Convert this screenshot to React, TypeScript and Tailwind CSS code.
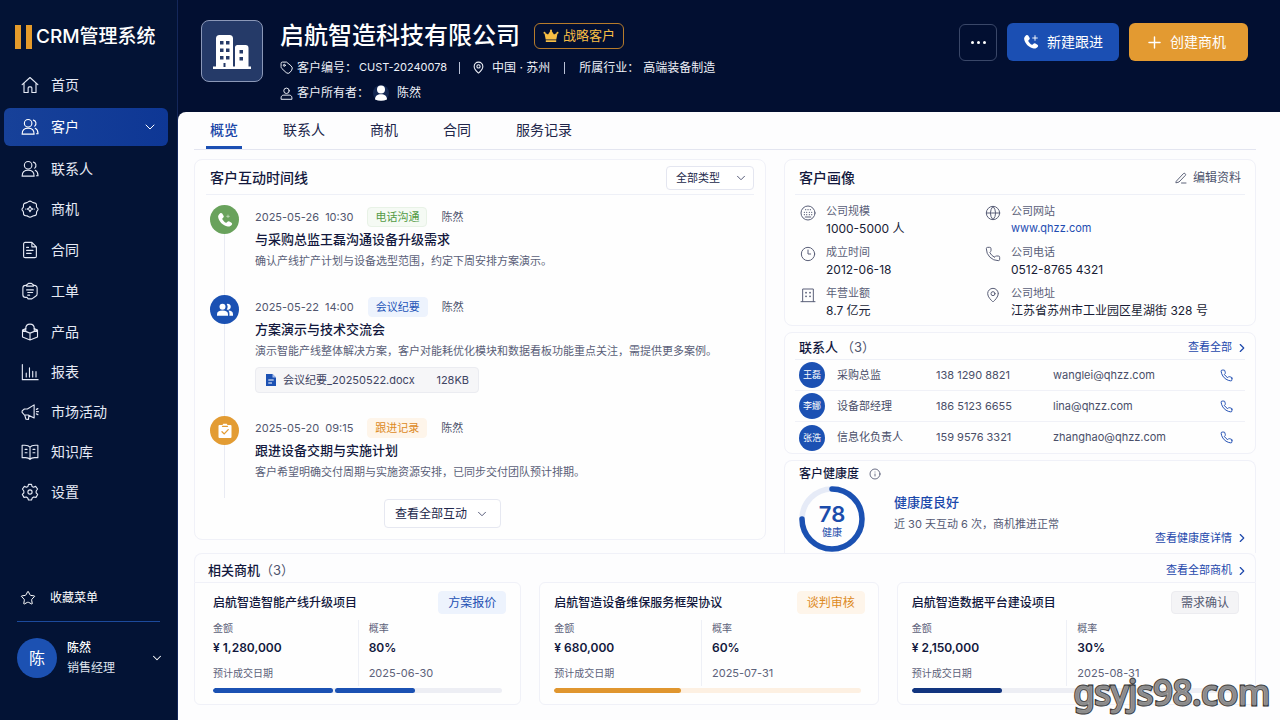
import type { ReactNode } from "react";
import { ChevronDown, ChevronRight, Clock3, Globe, Info, MapPin, Phone, Plus, Star } from "lucide-react";

type IconProps = { children: ReactNode; className?: string; strokeWidth?: number };

function Line({ children, className = "size-[18px]", strokeWidth = 1.5 }: IconProps) {
  return (
    <svg viewBox="0 0 24 24" className={className} fill="none" stroke="currentColor" strokeWidth={strokeWidth} strokeLinecap="round" strokeLinejoin="round" aria-hidden="true">
      {children}
    </svg>
  );
}

const PHONE = "M22 16.92v3a2 2 0 0 1-2.18 2 19.79 19.79 0 0 1-8.63-3.07 19.5 19.5 0 0 1-6-6 19.79 19.79 0 0 1-3.07-8.67A2 2 0 0 1 4.11 2h3a2 2 0 0 1 2 1.72 12.84 12.84 0 0 0 .7 2.81 2 2 0 0 1-.45 2.11L8.09 9.91a16 16 0 0 0 6 6l1.27-1.27a2 2 0 0 1 2.11-.45 12.84 12.84 0 0 0 2.81.7A2 2 0 0 1 22 16.92z";

function PhonePlus({ className, small }: { className: string; small?: boolean }) {
  return (
    <svg viewBox="0 0 24 24" className={className} fill="currentColor" aria-hidden="true">
      <path d="M4.800 1.800c1-.8 2.300-.6 3 .5l2 3.200c.6 1 .5 2.100-.4 2.900L8.100 9.600c-.3.300-.3.700-.1 1.100 1.400 2.400 3 4.100 5.400 5.400.4.200.8.1 1.100-.2l1.200-1.300c.8-.8 1.900-1 2.900-.4l3.100 1.900c1.100.7 1.300 2 .5 3-1.500 2-3.600 3.200-6.100 2.700C8.900 20.500 2.800 14 1.700 7.400 1.400 5.200 3.100 3.100 4.800 1.800z" />
      {small ? (
        <path d="M16.500 4.500v4M14.500 6.500h4" stroke="currentColor" strokeWidth="1" strokeLinecap="round" opacity="0.700" />
      ) : (
        <path d="M18 2.500v7M14.500 6h7" stroke="currentColor" strokeWidth="1.400" strokeLinecap="round" />
      )}
    </svg>
  );
}

function People() {
  return (
    <Line>
      <circle cx="9.500" cy="7" r="5" />
      <path d="M1.500 21.500c0-4.800 3.200-8 8-8s8 3.200 8 8z" />
      <path d="M16.500 2.800a4.600 4.600 0 0 1 1.800 8M19 13.800c2.400 1.200 3.700 3.700 3.700 7.200h-2" />
    </Line>
  );
}

const home = (
  <Line>
    <path d="M1.500 11.500 12 2l10.500 9.500M4 9.500V22h5.500v-6a1.500 1.500 0 0 1 1.500-1.500h2a1.500 1.500 0 0 1 1.500 1.500v6H20V9.500" />
  </Line>
);
const deal = (
  <Line>
    <path d="M12 1.500c2 0 2.500 1.500 4.200 2s3.300.2 4.100 1.900-.2 2.600.6 4.200 1.800 1.400 1.800 2.900-1.300 1.800-1.800 3.200.3 2.800-.8 4.200-2.600.6-4.200 1.300-2 1.600-3.900 1.600-2.300-1.100-3.900-1.600-3.200.1-4.200-1.300-.2-2.700-.8-4.200S1.300 14 1.300 12.500s1.300-1.600 1.800-2.900-.3-2.700.6-4.200 2.400-1.400 4.100-1.900S10 1.500 12 1.500z" />
    <path d="m12 8.500 1.200 2.300 2.500 1.300-2.500 1.300L12 15.700l-1.200-2.300-2.500-1.300 2.500-1.300z" />
    <path d="M6.300 12.100h.1M17.600 12.100h.1" />
  </Line>
);
const contract = (
  <Line>
    <path d="M14.500 1.800H5.500a2 2 0 0 0-2 2v16.400a2 2 0 0 0 2 2h13a2 2 0 0 0 2-2V7.800zM14.500 1.800v6h6M7.500 8.500h2.500M7.500 12.500h8.500M7.500 16.500h6" />
  </Line>
);
const ticket = (
  <Line>
    <path d="M7.500 4.500H6a3.500 3.500 0 0 0-3.500 3.500v9A3.500 3.500 0 0 0 6 20.500h2l1.500 2h5l5-3.500a3.500 3.500 0 0 0 2-3V8A3.500 3.500 0 0 0 18 4.500h-1.500" />
    <path d="M7.500 5.500V4l2.500-2.200h4L16.500 4v1.500zM7.500 10.500h9M9 14h6.500M9 17.500h2.500" />
  </Line>
);
const product = (
  <Line>
    <path d="M6.500 7.500 2 9.500v9.200l10 4 10-4V9.500l-4.500-2M2 9.500l10 4 10-4M12 13.500v9" />
    <path d="M6.300 11v-3.500C6.300 4 8.500 1.500 12 1.500S17.700 4 17.700 7.500V11" />
  </Line>
);
const report = (
  <Line>
    <path d="M1.800 2v20.200h21M7 18.500v-5M11.300 18.500V6.500M15.600 18.500V11M20 18.500v-7" />
  </Line>
);
const megaphone = (
  <Line>
    <path d="M17.500 2.500v17.500L9.500 16H4.500L1.500 12.500v-2L4.500 8h4zM5 16l1.500 5.500L10 22l.5-5.500" />
    <path d="m20.500 8.500 2-1M20.700 11.500h2.500M20.500 14.500l2 1" />
  </Line>
);
const book = (
  <Line>
    <path d="M12 5.500C10.500 3.500 8 3 5 3H1.500v16.500H6c3 0 4.800.7 6 2.500 1.200-1.800 3-2.500 6-2.500h4.500V3H19c-3 0-5.500.5-7 2.500zM12 5.500V22M5.500 8.500h2.500M5.500 13h2.500M16 8.500h2.500M16 13h2.500" />
  </Line>
);
const gear = (
  <Line>
    <circle cx="12" cy="12" r="2.800" />
    <path d="M10 1.800h4l.8 2.900 1.700.9 3-1.100 2.600 3.500-1.900 2.700v2.500l2 2.100-2.200 3.900-3.100-.5-1.900 1.300-1 2.700h-4l-1-2.700-1.900-1.300-3.100.5-2.200-3.900 2-2.100v-2.500L1.900 8l2.600-3.500 3 1.100 1.700-.9z" />
  </Line>
);

type NavEntry = { label: string; icon: ReactNode; active?: boolean };

const primaryNav: NavEntry[] = [
  { label: "首页", icon: home },
  { label: "客户", icon: <People />, active: true },
  { label: "联系人", icon: <People /> },
];
const businessNav: NavEntry[] = [
  { label: "商机", icon: deal },
  { label: "合同", icon: contract },
  { label: "工单", icon: ticket },
  { label: "产品", icon: product },
];
const systemNav: NavEntry[] = [
  { label: "报表", icon: report },
  { label: "市场活动", icon: megaphone },
  { label: "知识库", icon: book },
  { label: "设置", icon: gear },
];

function NavItem({ item }: { item: NavEntry }) {
  return (
    <li>
      <a
        href="#"
        aria-current={item.active ? "page" : undefined}
        className={
          item.active
            ? "flex h-[38px] items-center gap-3 rounded-md bg-linear-to-r from-[#174199] to-[#0e3795] pr-2.5 pl-[17px] text-sm text-white"
            : "flex h-[38px] items-center gap-3 rounded-md pr-2.5 pl-[17px] text-sm text-[#e6eaf5]"
        }
      >
        {item.icon}
        <span className="flex-1">{item.label}</span>
        {item.active && <ChevronDown className="size-4" strokeWidth={1.5} />}
      </a>
    </li>
  );
}

function Sidebar() {
  return (
    <aside className="flex w-[178px] shrink-0 flex-col border-r border-[#14275a] bg-[#031335] text-[#e6eaf5]">
      <div className="flex h-[66px] items-center gap-1 pt-2 pl-[15px]">
        <span className="flex gap-[5px]" aria-hidden="true">
          <i className="h-6 w-1.5 bg-[#e59b2b]" />
          <i className="h-6 w-1.5 bg-[#e59b2b]" />
        </span>
        <span className="text-[19px] font-medium whitespace-nowrap text-white">CRM管理系统</span>
      </div>
      <nav className="flex flex-col gap-0.5 pr-[9px] pl-1">
        <ul className="flex flex-col gap-1">{primaryNav.map((n) => <NavItem key={n.label} item={n} />)}</ul>
        <ul className="flex flex-col gap-[3px]">{businessNav.map((n) => <NavItem key={n.label} item={n} />)}</ul>
        <ul className="flex flex-col gap-0.5">{systemNav.map((n) => <NavItem key={n.label} item={n} />)}</ul>
      </nav>
      <div className="mt-auto px-[17px] pb-[42px]">
        <a href="#" className="flex h-12 items-center gap-3.5 border-b border-[#1c4a9c] pl-[3px] text-xs text-white">
          <Star className="size-4" strokeWidth={1.5} />
          收藏菜单
        </a>
        <button type="button" className="mt-4 flex w-full items-center gap-2.5 text-left text-xs text-white">
          <span className="grid size-10 shrink-0 place-items-center rounded-full bg-[#1c51b2] text-base">陈</span>
          <span className="flex-1 leading-5">
            <span className="block font-medium">陈然</span>
            <span className="block text-[#dfe3ee]">销售经理</span>
          </span>
          <ChevronDown className="-mr-1 size-3.5" strokeWidth={1.8} />
        </button>
      </div>
    </aside>
  );
}

function Header() {
  return (
    <header className="flex h-28 items-start justify-between gap-4 pr-8 pl-[23px] text-white">
      <div className="flex gap-[17px] pt-5">
        <div className="grid size-[62px] shrink-0 place-items-center rounded-lg border border-[#8b98b8] bg-[#253a68]">
          <svg viewBox="0 0 40 36" className="h-9 w-10" aria-hidden="true">
            <path fill="#fff" fillRule="evenodd" d="M1 33.500h3V5.500A3.500 3.500 0 0 1 7.500 2h10A3.500 3.500 0 0 1 21 5.500v28h2V14.500a2.500 2.500 0 0 1 2.500-2.500h8a3 3 0 0 1 3 3v18.500H39V36H1zM8 8v3.500h3.500V8zm6 0v3.500h3.500V8zm-6 7.500V19h3.500v-3.500zm6 0V19h3.500v-3.500zM8 23v3.500h3.500V23zm6 0v3.500h3.500V23zM27.500 17v3.500H31V17zm0 7v3.500H31V24zM11.500 30v4h2v-4z" />
          </svg>
        </div>
        <div className="text-xs">
          <div className="flex h-8 items-center gap-3.5">
            <h1 className="text-2xl font-medium whitespace-nowrap">启航智造科技有限公司</h1>
            <span className="flex h-[26px] items-center gap-1 rounded-md border border-[#b67b2b] px-2 text-[13px] text-[#f6bd44]">
              <svg viewBox="0 0 16 14" className="h-3.5 w-4" fill="currentColor" aria-hidden="true">
                <path d="M1.300 3.500 5 5.500 8 1l3 4.500 3.700-2L13.300 10.500H2.700zM2.800 11.300h10.400V13H2.800z" />
                <circle cx="8" cy="1.400" r="1" /><circle cx="1.500" cy="3.700" r="1" /><circle cx="14.500" cy="3.700" r="1" />
              </svg>
              战略客户
            </span>
          </div>
          <div className="flex h-[31px] items-center whitespace-nowrap text-[#eef1f8]">
            <Line className="mr-1 size-[13px]" strokeWidth={1.8}>
              <path d="M2 9V4.500A2.500 2.500 0 0 1 4.500 2H12l8.500 7a6 6 0 0 1 1 8l-3 4a5 5 0 0 1-7 .5L3.500 14A4 4 0 0 1 2 11z" /><circle cx="8" cy="8" r="1.800" />
            </Line>
            <span>客户编号：</span>
            <span className="ml-0.5 text-[11px]">CUST-20240078</span>
            <i className="mx-3 h-3 w-px bg-[#b9c1d6]" />
            <MapPin className="size-[13px]" strokeWidth={2} />
            <span className="ml-[7px]">中国 · 苏州</span>
            <i className="mx-3.5 h-3 w-px bg-[#b9c1d6]" />
            <span>所属行业：</span>
            <span className="ml-1">高端装备制造</span>
          </div>
          <div className="flex h-5 items-center text-[#eef1f8]">
            <Line className="mr-1 size-[13px]" strokeWidth={1.8}>
              <circle cx="12" cy="7" r="5" /><path d="M2 22v-2c0-3 2-5 5-5h10c3 0 5 2 5 5v2z" />
            </Line>
            <span>客户所有者：</span>
            <svg viewBox="0 0 16 16" className="ml-1 size-4" aria-hidden="true">
              <circle cx="8" cy="8" r="8" fill="#142751" />
              <circle cx="8" cy="4.600" r="4" fill="#fff" /><path d="M2 14.500c0-3.500 2.500-5.200 6-5.200s6 1.700 6 5.200q-6 2.500-12 0z" fill="#fff" />
            </svg>
            <span className="ml-2">陈然</span>
          </div>
        </div>
      </div>
      <div className="flex items-center gap-2.5 pt-[23px] text-sm whitespace-nowrap">
        <button type="button" aria-label="更多" className="flex h-[37px] w-[38px] items-center justify-center gap-[3px] rounded-md border border-[#3a4768]">
          <i className="size-[3px] rounded-full bg-white" /><i className="size-[3px] rounded-full bg-white" /><i className="size-[3px] rounded-full bg-white" />
        </button>
        <button type="button" className="flex h-[38px] items-center gap-2 rounded-md bg-[#1b4fb3] px-4">
          <PhonePlus className="size-4" />
          新建跟进
        </button>
        <button type="button" className="flex h-[38px] items-center gap-1.5 rounded-md bg-[#e39a31] pr-[22px] pl-4">
          <Plus className="size-[19px]" strokeWidth={1.8} />
          创建商机
        </button>
      </div>
    </header>
  );
}

const tabs = ["概览", "联系人", "商机", "合同", "服务记录"];

function Tabs() {
  return (
    <nav className="flex gap-[37px] border-b border-[#e3e5f0] pl-3 text-sm">
      {tabs.map((t, i) => (
        <a
          key={t}
          href="#"
          className={
            i === 0
              ? "h-[37px] border-b-3 border-[#1b4fb3] px-1 pt-2 font-medium text-[#1b46a8]"
              : "h-[37px] px-1 pt-2 text-[#20254a]"
          }
        >
          {t}
        </a>
      ))}
    </nav>
  );
}

type TimelineEvent = {
  time: string;
  tag: string;
  tagClass: string;
  dotClass: string;
  icon: ReactNode;
  author: string;
  title: string;
  text: string;
  file?: { name: string; size: string };
};

const events: TimelineEvent[] = [
  {
    time: "2025-05-26  10:30",
    tag: "电话沟通",
    tagClass: "border-[#e8f2e6] bg-[#f5faf4] text-[#539a45]",
    dotClass: "bg-[#69a25c]",
    icon: <PhonePlus className="size-4" small />,
    author: "陈然",
    title: "与采购总监王磊沟通设备升级需求",
    text: "确认产线扩产计划与设备选型范围，约定下周安排方案演示。",
  },
  {
    time: "2025-05-22  14:00",
    tag: "会议纪要",
    tagClass: "border-[#edf3fd] bg-[#edf3fd] text-[#2455b8]",
    dotClass: "bg-[#1b51b3]",
    icon: (
      <svg viewBox="0 0 18 16" className="h-4 w-[18px]" fill="#fff" aria-hidden="true">
        <circle cx="6.500" cy="4.700" r="3" /><path d="M1 13.800v-1.600C1 9.700 3 8.500 6.500 8.500s5.500 1.200 5.500 3.700v1.600z" />
        <path d="M10.700 1.900a3 3 0 1 1 0 5.600 5 5 0 0 0 0-5.600zM12.300 8.500c3 .1 4.700 1.300 4.700 3.700v1.600h-3.600c.2-2.300.1-3.900-1.100-5.300z" />
      </svg>
    ),
    author: "陈然",
    title: "方案演示与技术交流会",
    text: "演示智能产线整体解决方案，客户对能耗优化模块和数据看板功能重点关注，需提供更多案例。",
    file: { name: "会议纪要_20250522.docx", size: "128KB" },
  },
  {
    time: "2025-05-20  09:15",
    tag: "跟进记录",
    tagClass: "border-[#fef5ea] bg-[#fef5ea] text-[#dd8a1f]",
    dotClass: "bg-[#e39c33]",
    icon: (
      <svg viewBox="0 0 16 16" className="size-4" aria-hidden="true">
        <path fill="#fff" d="M2.500 2h3l.8-1.200h3.400L10.500 2h3a1 1 0 0 1 1 1v11a1 1 0 0 1-1 1h-11a1 1 0 0 1-1-1V3a1 1 0 0 1 1-1z" />
        <path d="M5.500 3.300h5M5 8.700l2.200 2.200 4-4.300" fill="none" stroke="#e39c33" strokeWidth="1.300" strokeLinecap="round" />
      </svg>
    ),
    author: "陈然",
    title: "跟进设备交期与实施计划",
    text: "客户希望明确交付周期与实施资源安排，已同步交付团队预计排期。",
  },
];

function Timeline() {
  return (
    <section className="rounded-lg border border-[#f0f1f8] bg-[#fefefe] px-[11px] pb-[11px]">
      <div className="flex h-[35px] items-center justify-between border-b border-[#eef0f7] pt-0.5 pl-1">
        <h2 className="text-sm font-medium text-[#12183d]">客户互动时间线</h2>
        <label className="relative flex items-center">
          <span className="sr-only">互动类型</span>
          <select className="h-6 w-[88px] appearance-none rounded border border-[#e4e6f0] bg-white py-0 pl-[9px] text-[11px] leading-4 text-[#22284a]">
            <option>全部类型</option>
          </select>
          <ChevronDown className="pointer-events-none absolute right-1.5 size-3.5 text-[#4b5170]" strokeWidth={1.6} />
        </label>
      </div>
      <ol className="pt-2.5 pl-1">
        {events.map((e) => (
          <li key={e.time} className="group flex gap-4">
            <div className="flex flex-col items-center">
              <span className={`grid size-[29px] place-items-center rounded-full text-white ${e.dotClass}`}>{e.icon}</span>
              <i className="w-px flex-1 bg-[#e9ebf3]" />
            </div>
            <div className="min-w-0 flex-1 pb-[23px] group-last:pb-[15px]">
              <div className="flex h-6 items-center gap-3.5 text-[11px] text-[#51566f]">
                <time className="whitespace-pre">{e.time}</time>
                <span className={`flex h-5 items-center rounded border px-[7px] ${e.tagClass}`}>{e.tag}</span>
                <span>{e.author}</span>
              </div>
              <h3 className="text-[13px] leading-[21px] font-medium text-[#12183d]">{e.title}</h3>
              <p className="text-[11px] leading-[22px] text-[#5a5f78]">{e.text}</p>
              {e.file && (
                <a href="#" className="mt-[5px] flex h-[26px] w-56 items-center rounded border border-[#ebecf1] bg-[#f6f6f8] px-[9px] text-[11px] text-[#3e4462]">
                  <svg viewBox="0 0 12 14" className="mr-1.5 h-3.5 w-3" aria-hidden="true">
                    <path d="M1 1h6.500L11 4.500V13H1z" fill="#1c51b3" /><path d="M7.500 1v3.500H11" fill="#a9c0ee" /><path d="M3.300 7h5.400M3.300 10h3.700" stroke="#fff" strokeWidth="1.100" />
                  </svg>
                  <span className="flex-1">{e.file.name}</span>
                  {e.file.size}
                </a>
              )}
            </div>
          </li>
        ))}
      </ol>
      <div className="flex justify-center pt-px pr-[76px]">
        <button type="button" className="flex h-[29px] w-[117px] items-center justify-center gap-2 rounded border border-[#e6e8f1] bg-white text-xs text-[#20264a]">
          查看全部互动
          <ChevronDown className="size-3.5 text-[#4b5170]" strokeWidth={1.6} />
        </button>
      </div>
    </section>
  );
}

const facts: { label: string; value: string; icon: ReactNode; link?: boolean }[] = [
  {
    label: "公司规模", value: "1000-5000 人",
    icon: (
      <Line className="size-4">
        <circle cx="12" cy="12" r="10.500" />
        <path d="M8.500 7h.1M12 7h.1M15.500 7h.1M6.500 11h.1M10 11h.1M14 11h.1M17.500 11h.1M6.500 14.500h.1M10 14.500h.1M14 14.500h.1M17.500 14.500h.1M8 18h8" strokeWidth="1.800" />
      </Line>
    ),
  },
  { label: "公司网站", value: "www.qhzz.com", icon: <Globe className="size-4" strokeWidth={1.5} />, link: true },
  { label: "成立时间", value: "2012-06-18", icon: <Clock3 className="size-4" strokeWidth={1.5} /> },
  { label: "公司电话", value: "0512-8765 4321", icon: <Phone className="size-4" strokeWidth={1.5} /> },
  {
    label: "年营业额", value: "8.7 亿元",
    icon: (
      <Line className="size-4">
        <path d="M4 22V3h16v19M1.500 22h21" /><path d="M9 8.500h.1M15 8.500h.1M9 14h.1M15 14h.1" strokeWidth="2.600" />
      </Line>
    ),
  },
  { label: "公司地址", value: "江苏省苏州市工业园区星湖街 328 号", icon: <MapPin className="size-4" strokeWidth={1.5} /> },
];

function Profile() {
  return (
    <section className="rounded-lg border border-[#f0f1f8] bg-[#fefefe] px-2.5 pb-1.5">
      <div className="flex h-[35px] items-center justify-between border-b border-[#eef0f7] px-1 pt-px">
        <h2 className="text-sm font-medium text-[#12183d]">客户画像</h2>
        <button type="button" className="flex items-center gap-1.5 text-xs text-[#4d536c]">
          <Line className="size-3" strokeWidth={1.8}>
            <path d="M3 18 16.500 3.500a2.500 2.500 0 0 1 4 3.500L8 20l-5.500 1.500zM13 22h9" />
          </Line>
          编辑资料
        </button>
      </div>
      <dl className="grid grid-cols-[185px_1fr] gap-y-[7px] pt-2 pl-[5px] text-[11px] leading-[17px]">
        {facts.map((f) => (
          <div key={f.label} className="flex gap-2.5 text-[#5a5f78]">
            <span className="pt-0.5">{f.icon}</span>
            <div>
              <dt>{f.label}</dt>
              {f.link ? (
                <dd><a href="#" className="text-[#1f4db2]">{f.value}</a></dd>
              ) : (
                <dd className="text-xs leading-[17px] whitespace-nowrap text-[#181c35]">{f.value}</dd>
              )}
            </div>
          </div>
        ))}
      </dl>
    </section>
  );
}

function MoreLink({ children }: { children: ReactNode }) {
  return (
    <a href="#" className="-mr-1 flex items-center gap-[3px] text-[11px] text-[#1d48ac]">
      {children}
      <ChevronRight className="size-3.5" strokeWidth={2} />
    </a>
  );
}

const contacts = [
  { name: "王磊", role: "采购总监", phone: "138 1290 8821", mail: "wanglei@qhzz.com" },
  { name: "李娜", role: "设备部经理", phone: "186 5123 6655", mail: "lina@qhzz.com" },
  { name: "张浩", role: "信息化负责人", phone: "159 9576 3321", mail: "zhanghao@qhzz.com" },
];

function Contacts() {
  return (
    <section className="rounded-lg border border-[#f0f1f8] bg-[#fefefe] px-2.5">
      <div className="flex h-[27px] items-center justify-between border-b border-[#eef0f7] pt-[3px] pl-1">
        <h2 className="text-[13px] font-medium text-[#12183d]">
          联系人<span className="ml-[3px] font-normal text-[#4d536c]">（3）</span>
        </h2>
        <MoreLink>查看全部</MoreLink>
      </div>
      <table className="w-full table-fixed border-separate border-spacing-0 text-[11px] text-[#4a4f69]">
        <colgroup>
          <col className="w-[42px]" />
          <col className="w-[22%]" />
          <col className="w-[26%]" />
          <col />
          <col className="w-[25px]" />
        </colgroup>
        <tbody className="[&>tr:not(:last-child)>td]:border-b [&>tr:not(:last-child)>td]:border-[#f0f1f7]">
          {contacts.map((c) => (
            <tr key={c.name} className="h-[31px]">
              <td className="pl-1">
                <span className="grid size-[26px] place-items-center rounded-full bg-[#1c51b3] text-[9px] text-white">{c.name}</span>
              </td>
              <td>{c.role}</td>
              <td>{c.phone}</td>
              <td>{c.mail}</td>
              <td>
                <a href="#" aria-label={`致电${c.name}`} className="flex text-[#1f4db2]">
                  <Line className="size-[13px]" strokeWidth={1.8}><path d={PHONE} /></Line>
                </a>
              </td>
            </tr>
          ))}
        </tbody>
      </table>
    </section>
  );
}

function Health() {
  return (
    <section className="rounded-t-lg border border-b-0 border-[#f0f1f8] bg-[#fefefe] pr-2.5 pl-3.5">
      <h2 className="flex h-[25px] items-center gap-2.5 text-xs font-medium text-[#12183d]">
        客户健康度
        <Info className="size-3 text-[#5a5f78]" strokeWidth={1.8} />
      </h2>
      <div className="flex h-[67px]">
        <div className="relative size-[66px] shrink-0">
          <svg viewBox="0 0 66 66" className="size-[66px]" fill="none" strokeWidth="5.500" aria-hidden="true">
            <circle cx="33" cy="33" r="30" stroke="#e6ebf7" />
            <path d="M33 3a30 30 0 1 1-30 30" stroke="#1b51b2" strokeLinecap="round" />
          </svg>
          <div className="absolute inset-0 flex flex-col items-center justify-center pt-1 text-[#1b4cab]">
            <strong className="text-[22px] leading-[22px] font-semibold">78</strong>
            <span className="text-[10px] leading-[14px]">健康</span>
          </div>
        </div>
        <div className="flex-1 pt-[5px] pl-[29px]">
          <p className="text-[13px] leading-[22px] font-medium text-[#1b48ab]">健康度良好</p>
          <p className="text-[11px] leading-[22px] text-[#555a74]">近 30 天互动 6 次，商机推进正常</p>
        </div>
        <div className="self-end pb-[7px]">
          <MoreLink>查看健康度详情</MoreLink>
        </div>
      </div>
    </section>
  );
}

const deals = [
  {
    title: "启航智造智能产线升级项目", stage: "方案报价", amount: "¥ 1,280,000", chance: "80%", date: "2025-06-30",
    card: "rounded-tr-md rounded-b-md pl-[18px] pr-3.5", tag: "bg-[#edf3fd] border-[#edf3fd] text-[#2250b3]",
    split: "grid-cols-[146fr_148fr]", track: "bg-[#edeef4]", fill: "bg-[#1b51b3]", parts: [41.5, 27.5],
  },
  {
    title: "启航智造设备维保服务框架协议", stage: "谈判审核", amount: "¥ 680,000", chance: "60%", date: "2025-07-31",
    card: "rounded-md pl-3.5 pr-[13px]", tag: "bg-[#fef5ea] border-[#fef5ea] text-[#dd8a1f]",
    split: "grid-cols-[148fr_163fr]", track: "bg-[#fdf0e2]", fill: "bg-[#e0962f]", parts: [41.3],
  },
  {
    title: "启航智造数据平台建设项目", stage: "需求确认", amount: "¥ 2,150,000", chance: "30%", date: "2025-08-31",
    card: "rounded-tl-md rounded-b-md pl-3.5 pr-4", tag: "bg-[#f4f4f6] border-[#ececf0] text-[#555a72]",
    split: "grid-cols-[156fr_172fr]", track: "bg-[#edeef4]", fill: "bg-[#12357f]", parts: [28],
  },
];

function Deals() {
  return (
    <section>
      <div className="flex h-[29px] items-center justify-between rounded-t-lg border border-b-0 border-[#f0f1f8] pt-[5px] pr-2.5 pl-[13px]">
        <h2 className="text-[13px] font-medium text-[#12183d]">
          相关商机<span className="font-normal text-[#4d536c]">（3）</span>
        </h2>
        <MoreLink>查看全部商机</MoreLink>
      </div>
      <div className="grid grid-cols-[327fr_339fr_359fr] gap-[18px]">
        {deals.map((d) => (
          <article key={d.title} className={`border border-[#f0f1f8] bg-[#fefefe] pt-2 pb-[11px] ${d.card}`}>
            <div className="flex h-[23px] items-center justify-between">
              <h3 className="text-xs font-medium whitespace-nowrap text-[#12183d]">{d.title}</h3>
              <span className={`flex h-[23px] items-center rounded border px-[9px] text-xs ${d.tag}`}>{d.stage}</span>
            </div>
            <dl className={`mt-1.5 grid text-[10px] text-[#5d627a] ${d.split}`}>
              <div className="border-r border-[#eef0f6]">
                <dt className="leading-4">金额</dt>
                <dd className="text-xs leading-6 font-semibold text-[#12183d]">{d.amount}</dd>
                <dt className="leading-[26px]">预计成交日期</dt>
              </div>
              <div className="pl-2.5">
                <dt className="leading-4">概率</dt>
                <dd className="text-xs leading-6 font-semibold text-[#12183d]">{d.chance}</dd>
                <dd className="text-[11px] leading-[26px]">{d.date}</dd>
              </div>
            </dl>
            <div className={`mt-0.5 mr-1 flex h-[5px] gap-0.5 overflow-hidden rounded-full ${d.track}`}>
              {d.parts.map((p) => (
                <i key={p} className={`rounded-full ${d.fill}`} style={{ width: `${p}%` }} />
              ))}
            </div>
          </article>
        ))}
      </div>
    </section>
  );
}

export default function App() {
  return (
    <div className="relative flex min-h-screen overflow-hidden bg-[#020f31] font-[Inter,'Noto_Sans_CJK_SC',sans-serif]">
      <Sidebar />
      <div className="flex min-w-0 flex-1 flex-col">
        <Header />
        <main className="flex-1 rounded-tl-lg bg-[#fdfdfe] pr-6 pl-4">
          <Tabs />
          <div className="grid grid-cols-[572fr_472fr] items-start gap-[18px] pt-[9px]">
            <Timeline />
            <div className="flex flex-col gap-1.5">
              <Profile />
              <Contacts />
              <Health />
            </div>
          </div>
          <Deals />
        </main>
      </div>
      <div className="pointer-events-none absolute right-2.5 bottom-0.5 font-['Noto_Sans',sans-serif] text-[34px] leading-[52px] text-[#8b8b8b] [-webkit-text-stroke:3px_#2b2b2b] [paint-order:stroke_fill] [text-shadow:0_0_2px_#fff]">
        gsyjs98.com
      </div>
    </div>
  );
}
